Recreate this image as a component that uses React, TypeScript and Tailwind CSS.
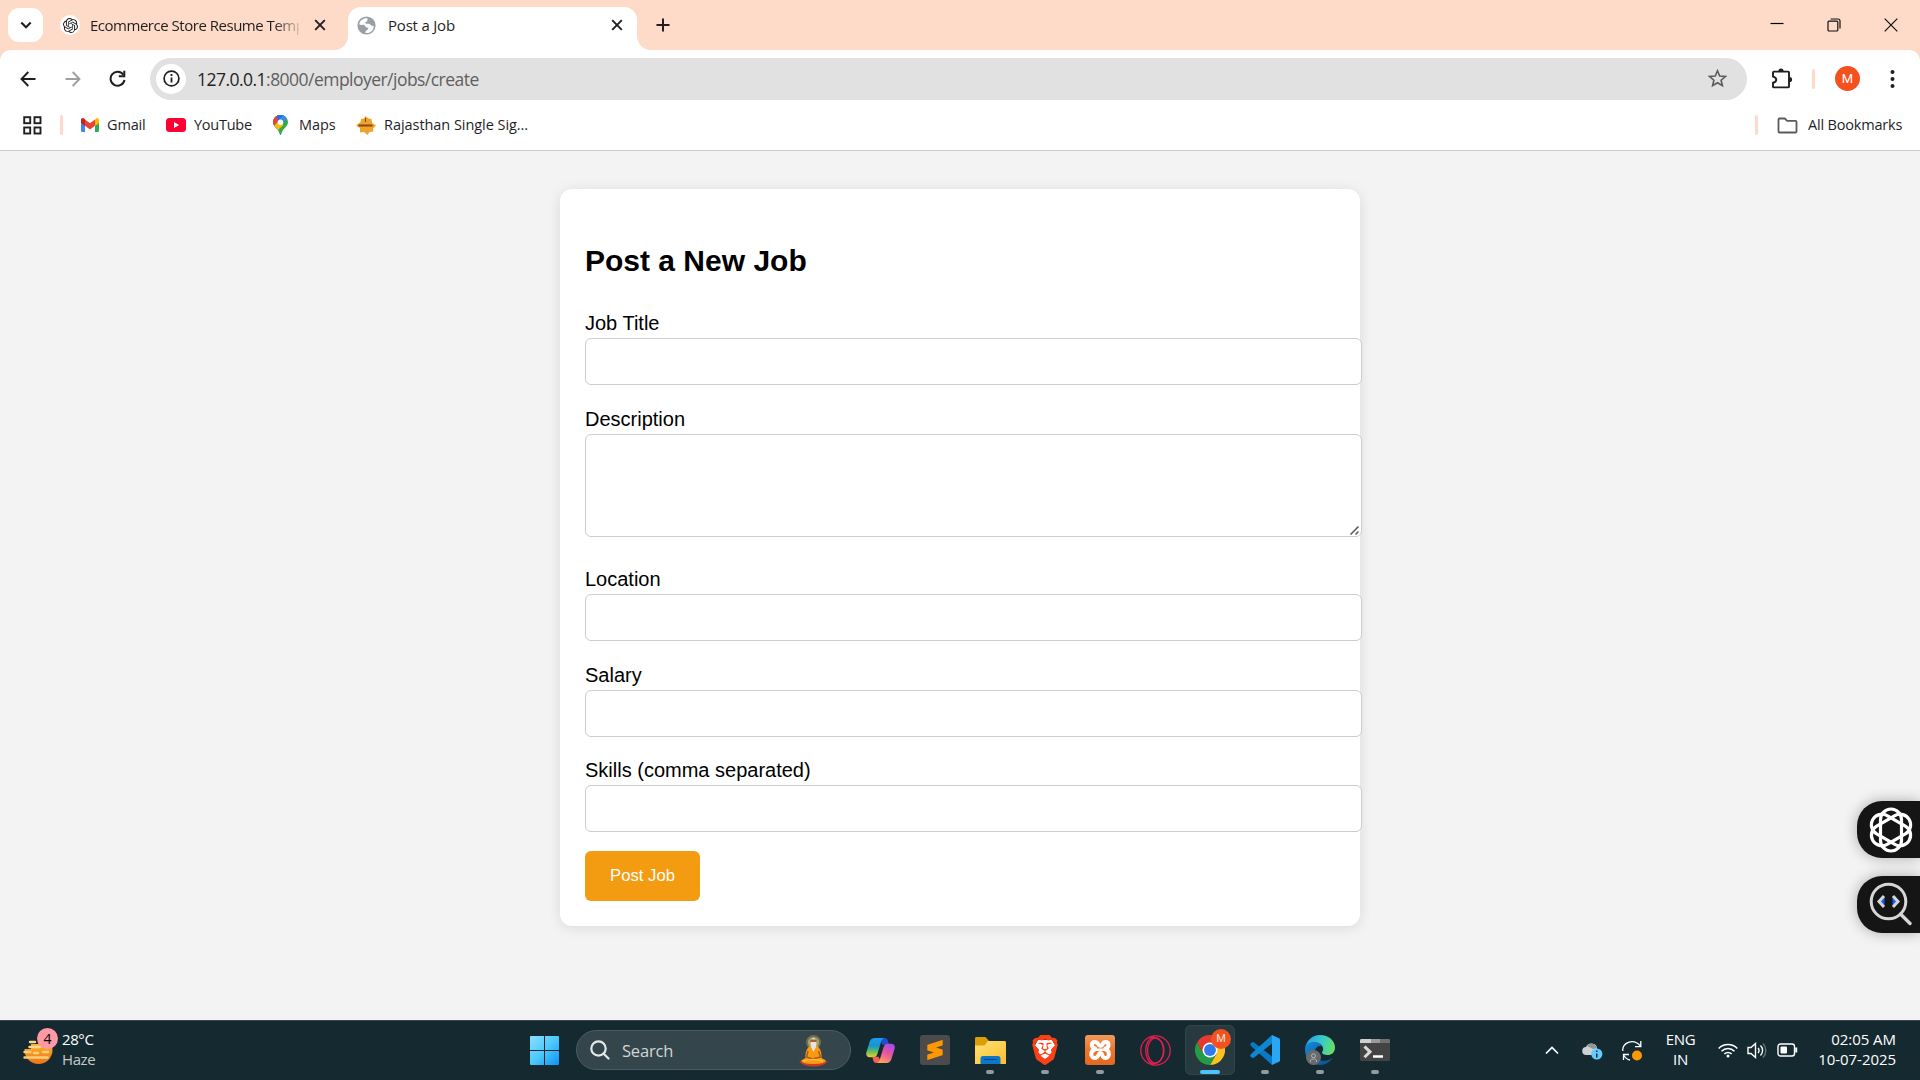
import React from "react";
import { SiOpenai, SiBrave, SiXampp, SiSublimetext } from "react-icons/si";

type Kids = { children?: React.ReactNode };

const CloseX = () => (
  <svg width="14" height="14" viewBox="0 0 14 14" className="shrink-0" stroke="#1f1f1f" strokeWidth="1.9" fill="none">
    <path d="M2.2 2.2l9.6 9.6M11.8 2.2l-9.6 9.6" />
  </svg>
);

function TabStrip() {
  return (
    <div className="flex h-[50px] items-center bg-[#fddbc8] pl-2 text-[15px] text-[#1f1f1f]">
      <button className="flex h-[34px] w-[35px] shrink-0 items-center justify-center rounded-[11px] bg-white">
        <svg width="12" height="8" viewBox="0 0 12 8" fill="none" stroke="#1f1f1f" strokeWidth="2.1">
          <path d="M1.3 1.5L6 6.2l4.7-4.7" />
        </svg>
      </button>
      <div className="ml-[17px] flex h-full w-[288px] shrink-0 items-center">
        <span className="flex h-5 w-5 items-center justify-center rounded-full bg-white">
          <SiOpenai size={15} />
        </span>
        <span className="ml-[10px] w-[209px] whitespace-nowrap tracking-[-0.48px] [mask-image:linear-gradient(to_right,black_88%,transparent_102%)]">
          Ecommerce Store Resume Temp
        </span>
        <span className="ml-[14px]"><CloseX /></span>
      </div>
      <div className="relative flex h-[43px] w-[289px] shrink-0 items-center self-end rounded-t-[13px] bg-white pb-[7px]">
        <svg className="absolute bottom-0 -left-[14px]" width="14" height="14" viewBox="0 0 14 14"><path d="M14 0v14H0A14 14 0 0 0 14 0z" fill="#fff" /></svg>
        <svg className="absolute bottom-0 -right-[14px]" width="14" height="14" viewBox="0 0 14 14"><path d="M0 0v14h14A14 14 0 0 1 0 0z" fill="#fff" /></svg>
        <svg className="ml-[9px]" width="19" height="19" viewBox="0 0 19 19">
          <circle cx="9.5" cy="9.5" r="9.1" fill="#9aa0a6" />
          <path d="M10.3 2.2C6.5 1.8 2.7 4.2 2.2 8.2c1.7 1.3 3.5.3 5 .8 1.6.6 1 2.4 2.8 2.5 1.2 0 1.4.9.7 1.9-.7.9-2.3.9-2.3 3.6 4.2.5 7.5-2 8.3-5.8.3-1.3-.8-1.6-2-1.5-1.1 0-1.4-1.8-3-1.9-1.7-.1-2.3.3-3.3-.5-.7-.8.5-1.5 1.3-1.9.9-.4.9-1.5.6-3.200z" fill="#fff" />
        </svg>
        <span className="ml-[12px] w-[222px] tracking-[-0.2px]">Post a Job</span>
        <CloseX />
      </div>
      <svg className="ml-[19px]" width="14" height="14" viewBox="0 0 14 14" stroke="#1f1f1f" strokeWidth="2"><path d="M7 .5v13M.5 7h13" /></svg>
      <div className="mr-[22px] ml-auto flex h-full items-center gap-[43px]">
        <svg width="14" height="14" viewBox="0 0 14 14"><path d="M.5 5.500h13" stroke="#000" strokeWidth="1.2" /></svg>
        <svg width="14" height="14" viewBox="0 0 14 14" fill="none" stroke="#111" strokeWidth="1.2"><rect x="1" y="3.200" width="9.800" height="9.800" rx="1" /><path d="M3.600 1h7.400a2 2 0 0 1 2 2v7.400" /></svg>
        <svg width="14" height="14" viewBox="0 0 14 14" stroke="#111" strokeWidth="1.200"><path d="M.7.7l12.600 12.600M13.300.7L.7 13.300" /></svg>
      </div>
    </div>
  );
}

function Toolbar() {
  return (
    <div className="flex h-[57px] items-center pl-[20px]">
      <svg width="16" height="16" viewBox="0 0 16 16" fill="none" stroke="#1f1f1f" strokeWidth="1.900"><path d="M15.500 8H1.800M8.300 1L1.500 8l6.800 7" /></svg>
      <svg className="ml-[29px]" width="16" height="16" viewBox="0 0 16 16" fill="none" stroke="#9e9e9e" strokeWidth="1.900"><path d="M.5 8h13.700M7.700 1l6.800 7-6.800 7" /></svg>
      <svg className="ml-[28px]" width="17" height="17" viewBox="0 0 17 17" fill="none" stroke="#1f1f1f" strokeWidth="2"><path d="M14.400 4.800A7 7 0 1 0 15.500 10" /><path d="M15.300.8v5.400H9.800" /></svg>
      <div className="ml-[24px] flex h-[42px] w-[1597px] shrink-0 items-center rounded-full bg-[#e1e1e1]">
        <span className="ml-[6px] flex h-[30px] w-[30px] items-center justify-center rounded-full bg-white">
          <svg width="17" height="17" viewBox="0 0 17 17"><circle cx="8.500" cy="8.500" r="7.400" fill="none" stroke="#1f1f1f" strokeWidth="1.700" /><path d="M8.500 7.600v5M8.500 4v1.900" stroke="#1f1f1f" strokeWidth="1.800" /></svg>
        </span>
        <span className="ml-[11px] pt-[2px] text-[17.5px] tracking-[-0.53px] whitespace-nowrap text-[#5f5f5f]">
          <span className="text-[#1f1f1f]">127.0.0.1</span>:8000/employer/jobs/create
        </span>
        <svg className="mr-[20px] ml-auto" width="19" height="19" viewBox="0 0 19 19" fill="none" stroke="#5a5a5a" strokeWidth="1.600"><path d="M9.500 1.800l2.200 5.200 5.700.5-4.300 3.700 1.300 5.500-4.900-2.900-4.900 2.900 1.300-5.500L1.600 7.500 7.300 7z" /></svg>
      </div>
      <svg className="ml-[24px]" width="22" height="22" viewBox="0 0 22 22"><path d="M3 3.600h14a1 1 0 0 1 1 1v13.800a1 1 0 0 1-1 1H3a1 1 0 0 1-1-1v-3.600c4.300-1 4.300-5.200 0-6.200V4.600a1 1 0 0 1 1-1z" fill="none" stroke="#1f1f1f" strokeWidth="1.900" /><path d="M7.400 3a2.600 2.600 0 0 1 5.200 0zM18.500 8.900a2.600 2.600 0 0 1 0 5.200z" fill="#1f1f1f" /></svg>
      <span className="ml-[19px] h-5 w-[3px] rounded bg-[#fddbc8]" />
      <span className="ml-[20px] flex h-[25px] w-[25px] items-center justify-center rounded-full bg-[#f4511e] font-[Roboto] text-[13px] text-white">M</span>
      <svg className="ml-[30px]" width="5" height="18" viewBox="0 0 5 18" fill="#1f1f1f"><circle cx="2.500" cy="2" r="2" /><circle cx="2.500" cy="9" r="2" /><circle cx="2.500" cy="16" r="2" /></svg>
    </div>
  );
}

function Bookmarks() {
  return (
    <div className="flex h-[36px] items-center pl-[23px] text-[14.500px] whitespace-nowrap text-[#1f1f1f]">
      <svg width="19" height="19" viewBox="0 0 19 19" fill="none" stroke="#1f1f1f" strokeWidth="1.900"><rect x="1.200" y="1.200" width="6" height="6" /><rect x="11.500" y="1.200" width="6" height="6" /><rect x="1.200" y="11.500" width="6" height="6" /><rect x="11.500" y="11.500" width="6" height="6" /></svg>
      <span className="ml-[18px] h-5 w-[3px] rounded bg-[#fddbc8]" />
      <svg className="ml-[18px]" width="18" height="14" viewBox="0 0 18 14"><path d="M0 2v10.800C0 13.500.5 14 1.200 14H4V4z" fill="#4285f4" /><path d="M18 2v10.800c0 .7-.5 1.200-1.200 1.200H14V4z" fill="#34a853" /><path d="M14 1.500V8l4-3V2c0-2-2-2.600-3.300-1.200z" fill="#fbbc04" /><path d="M0 2v3l4 3V1.500L3.300.8C2-.6 0 0 0 2z" fill="#c5221f" /><path d="M4 1.500v6.300l5 3.700 5-3.700V1.500L9 5.300z" fill="#ea4335" /></svg>
      <span className="ml-[8px] w-[59px] tracking-[-0.15px]">Gmail</span>
      <svg width="20" height="14" viewBox="0 0 20 14"><rect width="20" height="14" rx="3.500" fill="#ff0033" /><path d="M8 4l5.200 3L8 10z" fill="#fff" /></svg>
      <span className="ml-[8px] w-[79px] tracking-[-0.25px]">YouTube</span>
      <svg width="15" height="20" viewBox="0 0 15 20"><defs><clipPath id="pin"><path d="M7.500 0C3.300 0 0 3.200 0 7.200c0 4.300 5.600 6.200 6.800 12.200.2.800 1.200.8 1.400 0C9.400 13.400 15 11.500 15 7.200 15 3.200 11.700 0 7.500 0z" /></clipPath></defs><g clipPath="url(#pin)"><path d="M0 0h15v20H0z" fill="#34a853" /><path d="M0 0h15L0 17z" fill="#4285f4" /><path d="M0 0h5l2 5-6 7H0z" fill="#ea4335" /><path d="M3 0h10L6 7z" fill="#1a73e8" /><path d="M14.500 2.500L2 16 .5 11.500 10 0z" fill="#4285f4" /><path d="M0 12L5.500 6l5 4L3 17z" fill="#fbbc04" /></g><circle cx="7.500" cy="7.200" r="2.700" fill="#fff" /></svg>
      <span className="ml-[11px] w-[57px] tracking-[-0.1px]">Maps</span>
      <svg width="20" height="19" viewBox="0 0 20 19"><path d="M9.500 0l3 2.500 3 .5.5 4 4 2.500-3 3 .5 3-4 .5-2 3-3.500-3-4 .5V12L0 9.500 4.500 6l.5-3 3-.5z" fill="#eda42b" /><path d="M2.500 8.500h14v2h-14z" fill="#8c4510" /><path d="M9.500 2v4" stroke="#7b4213" /></svg>
      <span className="ml-[8px] tracking-[-0.05px]">Rajasthan Single Sig...</span>
      <span className="ml-auto h-5 w-[3px] rounded bg-[#fddbc8]" />
      <svg className="ml-[19px]" width="21" height="17" viewBox="0 0 21 17" fill="none" stroke="#5a5a5a" strokeWidth="1.800"><path d="M2.500 1.500h5.300l2.400 2.300h8.300c.6 0 1 .4 1 1v9.700c0 .6-.4 1-1 1h-16c-.6 0-1-.4-1-1v-12c0-.6.4-1 1-1z" /></svg>
      <span className="ml-[10px] w-[112px] tracking-[-0.18px]">All Bookmarks</span>
    </div>
  );
}

function Field({ label, area = false }: { label: string; area?: boolean }) {
  return (
    <label className="block">
      <span className="block h-[30px] text-[20px] leading-[30px]">{label}</span>
      {area ? (
        <span className="relative block h-[103px] w-[777px]">
          <textarea className="block h-full w-full resize-none rounded-[6px] border border-[#ccc] bg-white" />
          <svg className="absolute right-[3px] bottom-[2px]" width="9" height="9" viewBox="0 0 9 9" stroke="#555" strokeWidth="1.500"><path d="M.5 8.500l8-8M5.500 8.500l3-3" /></svg>
        </span>
      ) : (
        <input className="block h-[47px] w-[777px] rounded-[6px] border border-[#ccc] bg-white" />
      )}
    </label>
  );
}

function JobForm() {
  return (
    <form className="mx-auto mt-[38px] h-[737px] w-[800px] rounded-[12px] bg-white px-[25px] pt-[54px] font-['Liberation_Sans',Arial,sans-serif] text-black shadow-[0_2px_14px_rgba(0,0,0,0.1)]">
      <h2 className="h-[65px] text-[30px] leading-[35px] font-bold">Post a New Job</h2>
      <Field label="Job Title" />
      <div className="mt-[19px]"><Field label="Description" area /></div>
      <div className="mt-[27px]"><Field label="Location" /></div>
      <div className="mt-[19px]"><Field label="Salary" /></div>
      <div className="mt-[18px]"><Field label="Skills (comma separated)" /></div>
      <button type="button" className="mt-[19px] block h-[50px] w-[115px] rounded-[6px] bg-[#f39c12] pb-[2px] text-[16.67px] text-white">Post Job</button>
    </form>
  );
}

function SideButtons() {
  const box = "flex h-[57px] w-[63px] items-center rounded-l-[25px] bg-[#151515] shadow-[0_0_14px_rgba(0,0,0,0.3)]";
  return (
    <div className="absolute top-[801px] right-0 flex flex-col gap-[18px]">
      <div className={box}>
        <svg className="ml-[11px]" width="46" height="46" viewBox="0 0 46 46" fill="none" stroke="#fff" strokeWidth="3.200">
          <rect x="12.500" y="2" width="21" height="42" rx="10.500" />
          <rect x="12.500" y="2" width="21" height="42" rx="10.500" transform="rotate(60 23 23)" />
          <rect x="12.500" y="2" width="21" height="42" rx="10.500" transform="rotate(120 23 23)" />
        </svg>
      </div>
      <div className={box}>
        <svg className="ml-[12px] -mt-[2px]" width="44" height="44" viewBox="0 0 44 44" fill="none">
          <circle cx="19.500" cy="19.500" r="17.300" stroke="#d6d6d6" strokeWidth="3" />
          <path d="M31.500 32l9.500 9.500" stroke="#d6d6d6" strokeWidth="3.400" strokeLinecap="round" />
          <path d="M15.500 15.500v8l-4-4zM23.500 15.500v8l4-4z" fill="#0b63f3" />
          <path d="M15 14l-5 5.500 5 5.500M24 14l5 5.500-5 5.500" stroke="#d6d6d6" strokeWidth="3" />
        </svg>
      </div>
    </div>
  );
}

function App55({ children, dot, active }: Kids & { dot?: boolean; active?: boolean }) {
  return (
    <div className="relative flex h-full w-[55px] shrink-0 items-center justify-center">
      <div className={active ? "flex h-[50px] w-[50px] items-center justify-center rounded-[6px] bg-[#263a3f] ring-1 ring-[#31444a] ring-inset" : "flex h-[50px] w-[50px] items-center justify-center"}>{children}</div>
      {dot && <span className="absolute bottom-[6px] h-1 w-2 rounded-full bg-[#939b9e]" />}
      {active && <span className="absolute bottom-[6px] h-1 w-5 rounded-full bg-[#4cc2ff]" />}
    </div>
  );
}

const WindowsLogo = () => (
  <svg className="shrink-0" width="29" height="29" viewBox="0 0 29 29"><defs><linearGradient id="win" x1="0" y1="0" x2="1" y2="1"><stop stopColor="#8be0ff" /><stop offset=".5" stopColor="#4dc9fb" /><stop offset="1" stopColor="#0a93f8" /></linearGradient></defs><path d="M1 0h13v14H0V1a1 1 0 0 1 1-1zM15 0h13a1 1 0 0 1 1 1v13H15zM0 15h14v14H1a1 1 0 0 1-1-1zM15 15h14v13a1 1 0 0 1-1 1H15z" fill="url(#win)" /></svg>
);

const Sage = () => (
  <svg width="31" height="33" viewBox="0 0 31 33">
    <circle cx="15.500" cy="8.500" r="7.500" fill="#6b7052" /><circle cx="15.500" cy="8.500" r="5.500" fill="#aaa66d" />
    <path d="M1 27.500q14-3 29 0-5 5-14.500 5T1 27.500z" fill="#c83b25" />
    <path d="M12 12h7c3 2 5 6 4.500 12l4.500 2.500q-1 3.500-12.500 3.500T3 26.500L7.500 24C7 18 9 14 12 12z" fill="#f99a12" />
    <path d="M10 17l-1.500 6 6 2 8-2-2-6" fill="none" stroke="#a65c20" strokeWidth="1.500" />
    <path d="M5 27q10-3 20 0" stroke="#ffbe32" strokeWidth="1.500" fill="none" />
    <circle cx="15.500" cy="7" r="3.200" fill="#a46136" /><path d="M12.500 8h6l-.5 5-2.500 5-2.500-5z" fill="#e8e4db" /><path d="M12.800 5.500a3 3 0 0 1 5.400 0z" fill="#ddd5c5" />
  </svg>
);

const Copilot = () => (
  <svg width="29" height="25" viewBox="0 0 30 26"><defs>
    <linearGradient id="cpa" x1="0" y1="0" x2="0" y2="1"><stop stopColor="#1a9df0" /><stop offset=".4" stopColor="#1595c9" /><stop offset=".7" stopColor="#60bd64" /><stop offset="1" stopColor="#f0cf22" /></linearGradient>
    <linearGradient id="cpb" x1=".8" y1="0" x2=".3" y2="1"><stop stopColor="#a34bf0" /><stop offset=".5" stopColor="#e8569a" /><stop offset="1" stopColor="#ffa35c" /></linearGradient></defs>
    <path d="M14 0h5.500c2.200 0 2.700 1.500 3.200 3L24 7h-7z" fill="#1e4fd2" />
    <path d="M10 0h9c-2 .5-2.800 2-3.400 4l-3.500 11.500C11.300 18 10.300 20 8 20H4c-3.500 0-4.500-2.500-3.600-5.500L3.700 4C4.700 1 6.500 0 10 0z" fill="url(#cpa)" />
    <path d="M16 26h-5.500c-2.200 0-2.700-1.500-3.200-3L6.500 19.500H13z" fill="#ee6253" />
    <path d="M20 26h-9c2-.5 2.800-2 3.400-4l3.500-11.500C18.700 8 19.700 6 22 6h4c3.500 0 4.500 2.500 3.600 5.500L26.300 22c-1 3-2.800 4-6.300 4z" fill="url(#cpb)" />
  </svg>
);

const Folder = () => (
  <svg width="31" height="27" viewBox="0 0 31 27"><defs><linearGradient id="fold" x1="0" y1="0" x2="1" y2="1"><stop stopColor="#ffe174" /><stop offset="1" stopColor="#fcc02e" /></linearGradient></defs>
    <path d="M0 1.500C0 .6.600 0 1.500 0h8c1 0 1.500.4 2.200 1.200L14 4v6H0z" fill="#dc9d08" /><path d="M0 8.500h9.500L13 4h16.500c.9 0 1.500.6 1.500 1.500V27H0z" fill="url(#fold)" />
    <path d="M5.500 27v-5.500a2.500 2.500 0 0 1 2.500-2.500h15a2.500 2.500 0 0 1 2.500 2.500V27z" fill="#0f76c8" /><path d="M9 22.500h13" stroke="#0a4d8b" strokeWidth="1.200" />
  </svg>
);

const BraveLogo = () => (
  <span className="relative flex h-[30px] w-[26px] items-center justify-center">
    <svg className="absolute" width="26" height="30" viewBox="0 0 26 30"><path d="M6 5h14l4 7-4 10-7 6-7-6-4-10z" fill="#fff" /></svg>
    <SiBrave size={30} color="#fb4016" className="relative shrink-0" />
  </span>
);

const XamppLogo = () => (
  <span className="flex h-[30px] w-[30px] items-center justify-center rounded-[3px] bg-gradient-to-b from-[#ef9a5b] via-[#ee742c] to-[#e5681f]">
    <svg width="22" height="20" viewBox="0 0 22 20" fill="none" stroke="#fff" strokeWidth="4" strokeLinejoin="round" strokeLinecap="round"><path d="M6 8.500C2 7.500 1.500 2 6 2c3.500 0 3 4 5.500 4S13 2 16.500 2c4 0 4 5.500 0 6.500M6 9.500c-5 1-5 8.500 0 8.500 4 0 3-5 5.500-5s1 5 5 5c4.500 0 4.500-7.500 0-8.500" /><path d="M7 9.800h9" strokeWidth="2.500" /></svg>
  </span>
);

const OperaLogo = () => (
  <svg width="31" height="31" viewBox="0 0 31 31" fill="none" stroke="#e01f4f" strokeWidth="1.300"><circle cx="15.500" cy="15.500" r="14.700" /><ellipse cx="15.500" cy="15.500" rx="8" ry="12.500" /><path d="M10 3.700C17 0 24 7 24 15.500S17 31 10 27.300" /><path d="M14 1C3 5 3 26 14 30" /></svg>
);

const ChromeLogo = () => (
  <span className="relative block h-[30px] w-[30px]">
    <svg width="30" height="30" viewBox="0 0 48 48"><path d="M24 12h20.800A24 24 0 0 1 24 48l10.400-18z" fill="#fcc31e" /><path d="M3.200 12A24 24 0 0 0 24 48l10.400-18L24 24l-10.400 6z" fill="#259b48" /><path d="M3.200 12A24 24 0 0 1 44.800 12H24L13.600 30z" fill="#e33b2e" /><circle cx="24" cy="24" r="12" fill="#fff" /><circle cx="24" cy="24" r="9.500" fill="#2f7bee" /></svg>
    <span className="absolute -top-[6px] left-[16px] flex h-5 w-5 items-center justify-center rounded-full bg-[#f4511e] font-[Roboto] text-[11px] text-[#ffe3d9]">M</span>
  </span>
);

const CodeLogo = () => (
  <svg width="30" height="30" viewBox="0 0 30 30"><path d="M0 9l2-1.800 1.500-.1L22 21.500V30L1 11z" fill="#0879c4" /><path d="M0 21l2 1.800 1.500.1L22 8.500V0L1 19z" fill="#1085d2" /><path d="M22 0l7 3.200c.6.300 1 .8 1 1.500v20.600c0 .7-.4 1.200-1 1.500L22 30z" fill="#2aa7f4" /></svg>
);

const EdgeLogo = () => (
  <span className="relative block h-[30px] w-[30px]">
    <svg width="30" height="30" viewBox="0 0 30 30"><defs><linearGradient id="ega" x1="0" y1=".3" x2="1" y2=".5"><stop stopColor="#23a0e3" /><stop offset=".5" stopColor="#36c7d2" /><stop offset="1" stopColor="#65e063" /></linearGradient><linearGradient id="egb" x1="0" y1="0" x2="1" y2="1"><stop stopColor="#1488d8" /><stop offset="1" stopColor="#0c4c93" /></linearGradient></defs>
      <path d="M0 14C1 6 7 0 15 0c9 0 15 6 15 12.500 0 5-3.500 7.500-7.500 7.500-3.500 0-5.500-1.200-5.500-2.500 0-1 1.200-1.500 1.200-3.500C18.200 10.500 14 7.500 9.500 7.500 4.500 7.500 1 11 0 14z" fill="url(#ega)" />
      <path d="M0 15c0-5 4-8 9-8 4 0 7 1.500 8.500 4-5-1.500-8.500 3-7.500 8 1 5 6 8 12 6.500 2-.5 4-1.500 5.500-3C25.500 27 20.500 30 15 30 6.500 30 0 23.500 0 15z" fill="url(#egb)" />
    </svg>
    <svg className="absolute bottom-0 left-[1px]" width="15" height="15" viewBox="0 0 15 15"><circle cx="7.500" cy="7.500" r="7.500" fill="#666b6d" /><circle cx="7.500" cy="5.800" r="2" fill="none" stroke="#b5b5b5" /><path d="M4.500 12V10.500c0-2 6-2 6 0V12" fill="none" stroke="#b5b5b5" /></svg>
  </span>
);

const Terminal = () => (
  <svg width="30" height="22" viewBox="0 0 30 22"><rect width="30" height="22" rx="1.500" fill="#444" /><path d="M0 4V1.500C0 .6.600 0 1.500 0H11v4z" fill="#cfcfcf" /><path d="M11 0h9v4h-9z" fill="#9a9a9a" /><path d="M20 0h8.500c.9 0 1.500.6 1.500 1.500V4H20z" fill="#707070" /><path d="M4.500 7.500l5.500 5.300-5.500 5.400" fill="none" stroke="#dadada" strokeWidth="3" /><path d="M13 17.500h10" stroke="#fff" strokeWidth="2.500" /></svg>
);

function Taskbar() {
  return (
    <div className="flex h-[60px] items-center bg-[#152a30] text-[15px] text-white shadow-[inset_0_1px_0_#34474b]">
      <div className="flex w-[530px] shrink-0 items-center pl-[23px]">
        <span className="relative block h-[36px] w-[34px] -translate-y-[4px]">
          <svg width="34" height="36" viewBox="0 0 34 36"><defs><linearGradient id="sun" x1="0" y1="0" x2="0" y2="1"><stop stopColor="#ffc83c" /><stop offset="1" stopColor="#ef7313" /></linearGradient></defs><circle cx="15.500" cy="22" r="14" fill="url(#sun)" /><path d="M0 6h30v10H0zM0 16h8v5H0z" fill="#152a30" /><path d="M7 14h5M6.500 19H17" stroke="#fbd98a" strokeWidth="2.400" strokeLinecap="round" /><path d="M1.500 24h6M11 25h4M20 24h5M1.500 29.500h23" stroke="#f9d07c" strokeWidth="2.400" strokeLinecap="round" /></svg>
          <span className="absolute top-0 left-[14px] flex h-[21px] w-[21px] items-center justify-center rounded-full bg-[#ff99a4] text-[14px] text-black">4</span>
        </span>
        <span className="ml-[5px] block -translate-y-[1.500px] leading-5 tracking-[-0.4px] whitespace-nowrap"><span className="block">28°C</span><span className="block text-[#c3cacb]">Haze</span></span>
      </div>
      <WindowsLogo />
      <div className="ml-[17px] flex h-10 w-[275px] shrink-0 items-center rounded-full border border-[#4b5c61] bg-[#34464b] pl-[13px]">
        <svg width="20" height="20" viewBox="0 0 20 20" fill="none" stroke="#e5e8e8" strokeWidth="2.200"><circle cx="8.500" cy="8.500" r="7.200" /><path d="M13.500 13.500l5 5" strokeLinecap="round" /></svg>
        <span className="ml-[12px] w-[176px] pt-[2px] text-[16.500px] tracking-[-0.2px] text-[#d0d5d6]">Search</span>
        <Sage />
      </div>
      <div className="ml-[1.5px] flex h-full shrink-0 items-center">
        <App55><Copilot /></App55>
        <App55><span className="flex h-[30px] w-[30px] items-center justify-center rounded-[3px] bg-[#4b4b4b]"><SiSublimetext size={20} color="#ff9800" /></span></App55>
        <App55 dot><Folder /></App55>
        <App55 dot><BraveLogo /></App55>
        <App55 dot><XamppLogo /></App55>
        <App55><OperaLogo /></App55>
        <App55 active><ChromeLogo /></App55>
        <App55 dot><CodeLogo /></App55>
        <App55 dot><EdgeLogo /></App55>
        <App55 dot><Terminal /></App55>
      </div>
      <div className="mr-[24px] ml-auto flex h-full items-center">
        <svg width="14" height="9" viewBox="0 0 14 9" fill="none" stroke="#fff" strokeWidth="1.700"><path d="M1 7.500l6-6 6 6" /></svg>
        <svg className="ml-[23px] mt-[3px]" width="21" height="17" viewBox="0 0 21 17"><path d="M4.500 12A4 4 0 0 1 4 4C5 1 8.500-.5 12 1c2 .7 3 2.500 3 4.500L14 12z" fill="#d0d0d0" /><path d="M5 3c2-4 8-3.500 10 2l-4 1z" fill="#8d9799" /><circle cx="14.800" cy="11" r="5.600" fill="#60cdff" /><path d="M14.800 10.500v4M14.800 7.500v1.600" stroke="#10242a" strokeWidth="1.400" /></svg>
        <svg className="ml-[19px]" width="21" height="21" viewBox="0 0 21 21" fill="none" stroke="#fff" strokeWidth="1.300"><path d="M.8 11C0 3 11-2.500 18.500 6M18.800 1v5.700H13M8 20C5.500 19.500 3 17.500 1.500 15M1.500 20v-5.500H7" /><circle cx="15" cy="15.500" r="5" fill="#ff9800" stroke="none" /></svg>
        <span className="ml-[17px] w-[41px] -translate-y-[1.500px] text-center leading-5 tracking-[-0.3px]"><span className="block">ENG</span><span className="block">IN</span></span>
        <svg className="ml-[17px]" width="20" height="15" viewBox="0 0 20 15" fill="none" stroke="#fff" strokeWidth="1.500"><path d="M.7 5.500a13 13 0 0 1 18.600 0M3.500 8.300a9 9 0 0 1 13 0M6.300 11a5.300 5.300 0 0 1 7.400 0" /><circle cx="10" cy="13" r="1.500" fill="#fff" stroke="none" /></svg>
        <svg className="ml-[9px]" width="21" height="17" viewBox="0 0 21 17" fill="none" stroke="#fff" strokeWidth="1.400"><path d="M1 5.500h3l4.500-4v14L4 11.500H1z" /><path d="M11 6a3.500 3.500 0 0 1 0 5M13.500 3.500a7 7 0 0 1 0 10" /><path d="M16 1.500a10 10 0 0 1 0 14" stroke="#627277" /></svg>
        <svg className="ml-[9px]" width="21" height="14" viewBox="0 0 21 14" fill="none" stroke="#fff" strokeWidth="1.400"><rect x="1" y="1" width="16.500" height="12" rx="2.500" /><rect x="3.500" y="3.500" width="6.500" height="7" rx="1" fill="#fff" stroke="none" /><path d="M19.200 4.500v5" strokeWidth="2" /></svg>
        <span className="ml-[19px] w-[79px] -translate-y-[1.500px] text-right leading-5 tracking-[-0.05px] whitespace-nowrap"><span className="block">02:05 AM</span><span className="block">10-07-2025</span></span>
      </div>
    </div>
  );
}

export default function App() {
  return (
    <div className="relative flex h-[1080px] w-[1920px] flex-col overflow-hidden bg-[#f3f3f3] font-['Open_Sans','Noto_Sans',sans-serif]">
      <TabStrip />
      <div className="bg-[#fddbc8]">
        <div className="h-[101px] rounded-t-[11px] border-b border-[#cbcbcb] bg-white">
          <Toolbar />
          <Bookmarks />
        </div>
      </div>
      <main className="flex-1"><div className="flow-root"><JobForm /></div></main>
      <SideButtons />
      <Taskbar />
    </div>
  );
}
